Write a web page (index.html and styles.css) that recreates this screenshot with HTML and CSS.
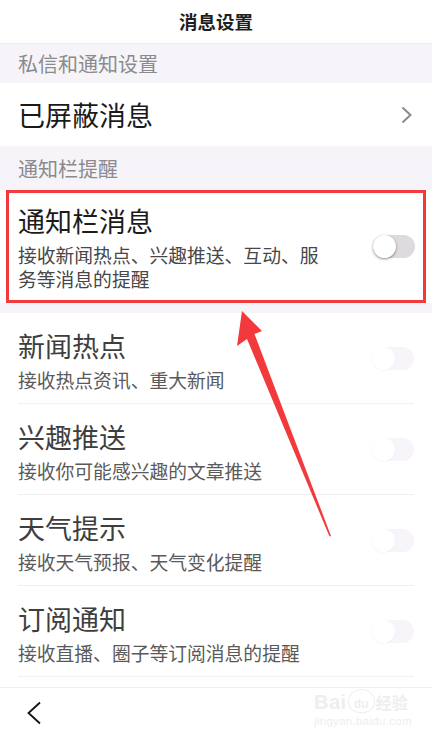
FILE: index.html
```html
<!DOCTYPE html>
<html lang="zh-CN">
<head>
<meta charset="utf-8">
<title>消息设置</title>
<link rel="stylesheet" href="styles.css">
</head>
<body>
<div class="page">
  <header class="topbar">消息设置</header>
  <div class="section-head first">私信和通知设置</div>
  <div class="link-row">
    <span class="link-title">已屏蔽消息</span>
    <svg class="chev" width="11" height="18" viewBox="0 0 11 18"><polyline points="1.5,1.5 9.5,9 1.5,16.5" fill="none" stroke="#8a8a8e" stroke-width="2"/></svg>
  </div>
  <div class="section-head second">通知栏提醒</div>
  <div class="notice-row">
    <div class="highlight">
      <div class="texts">
        <div class="title strong">通知栏消息</div>
        <div class="sub strong">接收新闻热点、兴趣推送、互动、服务等消息的提醒</div>
      </div>
      <span class="toggle on-look"><span class="knob"></span></span>
    </div>
  </div>
  <div class="gap"></div>
  <div class="list">
    <div class="item">
      <div class="texts"><div class="title">新闻热点</div><div class="sub">接收热点资讯、重大新闻</div></div>
      <span class="toggle faded"><span class="knob"></span></span>
    </div>
    <div class="item">
      <div class="texts"><div class="title">兴趣推送</div><div class="sub">接收你可能感兴趣的文章推送</div></div>
      <span class="toggle faded"><span class="knob"></span></span>
    </div>
    <div class="item">
      <div class="texts"><div class="title">天气提示</div><div class="sub">接收天气预报、天气变化提醒</div></div>
      <span class="toggle faded"><span class="knob"></span></span>
    </div>
    <div class="item">
      <div class="texts"><div class="title">订阅通知</div><div class="sub">接收直播、圈子等订阅消息的提醒</div></div>
      <span class="toggle faded"><span class="knob"></span></span>
    </div>
  </div>
  <div class="tail"></div>
  <footer class="bottombar">
    <svg class="back" width="16" height="24" viewBox="0 0 16 24"><polyline points="13,1.5 1.5,12 13,22.5" fill="none" stroke="#111" stroke-width="1.8"/></svg>
  </footer>

  <svg class="arrow" width="432" height="738" viewBox="0 0 432 738">
    <polygon points="242,311 262,331 254.5,334 331,536 329.5,536.5 247,339 237,346" fill="#f23a3c"/>
  </svg>

  <div class="watermark">
    <div class="wm-top"><span class="wm-bai">Bai</span><span class="wm-paw"><span class="wm-du">du</span></span><span class="wm-jy">经验</span></div>
    <div class="wm-url">jingyan.baidu.com</div>
  </div>
</div>
</body>
</html>
```

FILE: styles.css
```css
* { box-sizing: border-box; }
html, body { margin: 0; padding: 0; }
body {
  width: 432px;
  height: 738px;
  overflow: hidden;
  background: #ffffff;
  font-family: "Noto Sans CJK SC", "Noto Sans", sans-serif;
}
.page {
  position: relative;
  width: 432px;
  height: 738px;
  display: flex;
  flex-direction: column;
}
.topbar {
  height: 44px;
  line-height: 43px;
  border-bottom: 1px solid #ecebee;
  text-align: center;
  font-size: 18.5px;
  font-weight: 700;
  color: #1e1e1e;
}
.section-head {
  background: #f6f4f8;
  color: #8b8a8e;
  font-size: 20px;
  padding-left: 18px;
}
.section-head.first { height: 39px; line-height: 39px; }
.section-head.second { height: 44px; line-height: 46px; }
.link-row {
  height: 63px;
  display: flex;
  align-items: center;
  justify-content: space-between;
  padding: 0 20px 0 18px;
  background: #fff;
}
.link-title {
  font-size: 27px;
  color: #1a1a1a;
  line-height: 63px;
}
.chev { display: block; }
.notice-row {
  height: 113px;
  padding: 0 6px;
  background: #fff;
}
.highlight {
  height: 113px;
  border: 3px solid #f23a3c;
  display: flex;
  align-items: center;
  justify-content: space-between;
  padding: 11px 8px 8px 9px;
}
.texts { display: flex; flex-direction: column; gap: 6px; }
.title {
  font-size: 27px;
  line-height: 32px;
  color: #3e3e3e;
}
.sub {
  font-size: 18.8px;
  line-height: 24px;
  color: #5a5a5a;
}
.title.strong { color: #1c1c1c; }
.sub.strong { color: #474747; max-width: 312px; }
.gap { height: 10px; background: #f6f4f8; }
.list { display: flex; flex-direction: column; }
.item {
  height: 91px;
  margin: 0 18px;
  border-bottom: 1px solid #f1eff2;
  display: flex;
  align-items: center;
  justify-content: space-between;
  padding: 5px 0 0 0;
}
.toggle {
  position: relative;
  width: 42px;
  height: 23px;
  border-radius: 12px;
  flex: none;
}
.toggle .knob {
  position: absolute;
  left: 0;
  top: 0;
  width: 23px;
  height: 23px;
  border-radius: 50%;
  background: #fff;
}
.toggle.on-look { background: #dedade; margin-top: -4px; }
.toggle.on-look .knob { box-shadow: 0 1px 2.5px rgba(0,0,0,0.45); }
.toggle.faded { background: #f7f5f9; margin-top: -4px; }
.toggle.faded .knob { box-shadow: 0 0.5px 1.5px rgba(0,0,0,0.05); }
.tail { height: 10px; }
.bottombar {
  height: 51px;
  border-top: 1px solid #efeef1;
  display: flex;
  align-items: center;
  padding-left: 27px;
  background: #fff;
}
.back { display: block; }
.arrow {
  position: absolute;
  left: 0;
  top: 0;
  pointer-events: none;
}
.watermark {
  position: absolute;
  left: 314px;
  top: 683px;
  width: 96px;
  font-family: "Liberation Sans", Arial, sans-serif;
  color: #eeeeee;
}
.wm-top { display: flex; align-items: flex-end; height: 30px; }
.wm-bai { font-size: 20px; font-weight: 700; line-height: 22px; letter-spacing: 0.5px; }
.wm-paw {
  width: 27px;
  height: 24px;
  border-radius: 50% 50% 45% 45%;
  border: 1.5px solid #eeeeee;
  margin: 0 1px 0 1px;
  display: flex;
  align-items: flex-end;
  justify-content: center;
}
.wm-du { font-size: 12px; font-weight: 700; line-height: 15px; }
.wm-jy { font-family: "Noto Sans CJK SC", sans-serif; font-size: 16px; font-weight: 700; line-height: 22px; }
.wm-url { font-size: 11.5px; line-height: 15px; margin-top: 1px; letter-spacing: 0.3px; }
```
